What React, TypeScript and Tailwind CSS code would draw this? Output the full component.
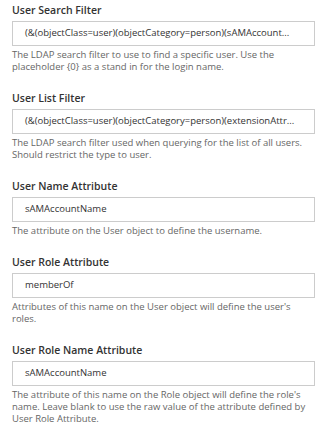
import React from 'react'

type Field = {
  label: string
  value: string
  help: string
}

const fields: Field[] = [
  {
    label: 'User Search Filter',
    value: '(&(objectClass=user)(objectCategory=person)(sAMAccount...',
    help: 'The LDAP search filter to use to find a specific user. Use the placeholder {0} as a stand in for the login name.',
  },
  {
    label: 'User List Filter',
    value: '(&(objectClass=user)(objectCategory=person)(extensionAttr...',
    help: 'The LDAP search filter used when querying for the list of all users. Should restrict the type to user.',
  },
  {
    label: 'User Name Attribute',
    value: 'sAMAccountName',
    help: 'The attribute on the User object to define the username.',
  },
  {
    label: 'User Role Attribute',
    value: 'memberOf',
    help: "Attributes of this name on the User object will define the user's roles.",
  },
  {
    label: 'User Role Name Attribute',
    value: 'sAMAccountName',
    help: "The attribute of this name on the Role object will define the role's name. Leave blank to use the raw value of the attribute defined by User Role Attribute.",
  },
]

function FormField({ field }: { field: Field }) {
  return (
    <div className="flex flex-col mb-[17px]">
      <label className="text-[10.5px] leading-4 font-semibold text-[#333333] mb-[3px]">
        {field.label}
      </label>
      <div className="h-[25px] w-[303px] border border-[#cccccc] bg-white pl-3 flex items-center">
        <span className="whitespace-nowrap text-[9.5px] text-[#333333]">{field.value}</span>
      </div>
      <p className="mt-[3px] text-[9.5px] leading-3 text-[#666666] w-[300px]">{field.help}</p>
    </div>
  )
}

export default function App() {
  return (
    <div
      className="w-[320px] h-[434px] overflow-hidden bg-white pl-3 pt-[2px]"
      style={{ fontFamily: '"Open Sans", sans-serif' }}
    >
      {fields.map((f) => (
        <FormField key={f.label} field={f} />
      ))}
    </div>
  )
}
